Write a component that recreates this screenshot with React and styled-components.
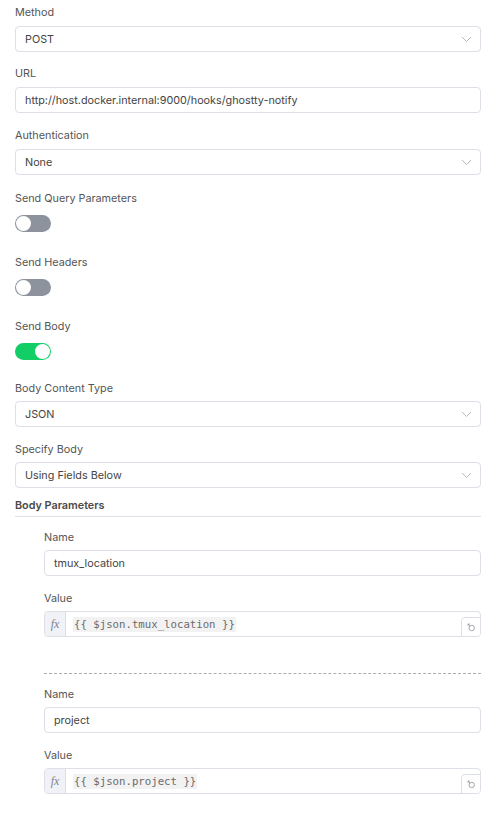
import styled, { createGlobalStyle } from 'styled-components';

const GlobalStyle = createGlobalStyle`
    body {
        margin: 0;
        background: #ffffff;
        font-family: Inter, "Open Sans", sans-serif;
        -webkit-font-smoothing: antialiased;
    }
`;

const Page = styled.div`
    padding: 2px 12px 20px 15px;
    display: flex;
    flex-direction: column;
`;

const Field = styled.div`
    display: flex;
    flex-direction: column;
    margin-bottom: ${(p) => p.$mb ?? 11}px;
`;

const Label = styled.div`
    font-size: 10.8px;
    line-height: 18px;
    color: #555555;
    margin-top: ${(p) => p.$shift ?? 2}px;
    margin-bottom: ${(p) => p.$gap ?? 4}px;
`;

const Box = styled.div`
    height: 26px;
    box-sizing: border-box;
    border: 1px solid #dcdfe6;
    border-radius: 4px;
    display: flex;
    align-items: center;
    padding: 0 8px 0 9px;
    font-size: 10.8px;
    color: #444444;
    background: #ffffff;
`;

const BoxText = styled.span`
    flex: 1;
`;

const Chevron = styled.svg`
    width: 11px;
    height: 7px;
`;

const Track = styled.div`
    width: 36px;
    height: 17px;
    border-radius: 9px;
    background: ${(p) => (p.$on ? '#13ce66' : '#8d939c')};
    position: relative;
`;

const Knob = styled.div`
    position: absolute;
    top: 1px;
    left: ${(p) => (p.$on ? '20px' : '1px')};
    width: 15px;
    height: 15px;
    border-radius: 50%;
    background: #ffffff;
`;

const SectionTitle = styled.div`
    font-size: 10.8px;
    line-height: 18px;
    font-weight: 600;
    color: #4a4a4a;
    padding-top: 1px;
    padding-bottom: 1px;
    border-bottom: 1px solid #dcdfe6;
    margin-bottom: 10px;
`;

const Params = styled.div`
    padding-left: 29px;
    display: flex;
    flex-direction: column;
`;

const Divider = styled.div`
    border-top: 1px dashed #a8acb3;
    margin: 36px 0 10px;
`;

const ExprBox = styled.div`
    height: 26px;
    box-sizing: border-box;
    border: 1px solid #dcdfe6;
    border-radius: 4px;
    display: flex;
    position: relative;
    overflow: hidden;
`;

const Fx = styled.div`
    width: 20px;
    background: #f0f2f7;
    border-right: 1px solid #dcdfe6;
    display: flex;
    align-items: center;
    justify-content: center;
    font-family: "Liberation Serif", serif;
    font-style: italic;
    font-size: 12px;
    color: #7d838c;
`;

const Code = styled.div`
    display: flex;
    align-items: center;
    padding-left: 7px;
`;

const Expr = styled.span`
    font-family: "DejaVu Sans Mono", monospace;
    font-size: 10.7px;
    line-height: 15px;
    color: #6b6b6b;
    background: #f2f2f3;
    padding: 0 1px;
`;

const Corner = styled.div`
    position: absolute;
    right: -1px;
    bottom: -1px;
    width: 18px;
    height: 18px;
    border: 1px solid #dcdfe6;
    border-top-left-radius: 4px;
    background: #ffffff;
    display: flex;
    align-items: center;
    justify-content: center;
`;

function Select({ value }) {
    return (
        <Box>
            <BoxText>{value}</BoxText>
            <Chevron viewBox="0 0 11 7">
                <path d="M1 1l4.5 4.5L10 1" fill="none" stroke="#b4b8c0" strokeWidth="1" />
            </Chevron>
        </Box>
    );
}

function Toggle({ label, on, mb }) {
    return (
        <Field $mb={mb}>
            <Label $shift={1} $gap={7}>{label}</Label>
            <Track $on={on}>
                <Knob $on={on} />
            </Track>
        </Field>
    );
}

function ExpressionInput({ code }) {
    return (
        <ExprBox>
            <Fx>fx</Fx>
            <Code>
                <Expr>{code}</Expr>
            </Code>
            <Corner>
                <svg width="9" height="9" viewBox="0 0 9 9">
                    <circle cx="4.7" cy="5" r="2.7" fill="none" stroke="#9a9ea6" strokeWidth="0.9" />
                    <path d="M1 1l2.2 2.2M1 1h1.8M1 1v1.8" fill="none" stroke="#9a9ea6" strokeWidth="0.9" />
                </svg>
            </Corner>
        </ExprBox>
    );
}

const params = [
    { name: 'tmux_location', value: '{{ $json.tmux_location }}' },
    { name: 'project', value: '{{ $json.project }}' },
];

function App() {
    return (
        <Page>
            <GlobalStyle />
            <Field>
                <Label>Method</Label>
                <Select value="POST" />
            </Field>
            <Field $mb={12}>
                <Label>URL</Label>
                <Box>http://host.docker.internal:9000/hooks/ghostty-notify</Box>
            </Field>
            <Field $mb={14}>
                <Label>Authentication</Label>
                <Select value="None" />
            </Field>
            <Toggle label="Send Query Parameters" mb={21} />
            <Toggle label="Send Headers" mb={21} />
            <Toggle label="Send Body" on mb={18} />
            <Field $mb={12}>
                <Label $gap={3}>Body Content Type</Label>
                <Select value="JSON" />
            </Field>
            <Field $mb={8}>
                <Label $gap={3}>Specify Body</Label>
                <Select value="Using Fields Below" />
            </Field>
            <SectionTitle>Body Parameters</SectionTitle>
            <Params>
                {params.map((p, i) => (
                    <div key={p.name}>
                        {i > 0 && <Divider />}
                        <Field $mb={12}>
                            <Label $gap={3}>Name</Label>
                            <Box>{p.name}</Box>
                        </Field>
                        <Field $mb={0}>
                            <Label $gap={3}>Value</Label>
                            <ExpressionInput code={p.value} />
                        </Field>
                    </div>
                ))}
            </Params>
        </Page>
    );
}

export default App;
